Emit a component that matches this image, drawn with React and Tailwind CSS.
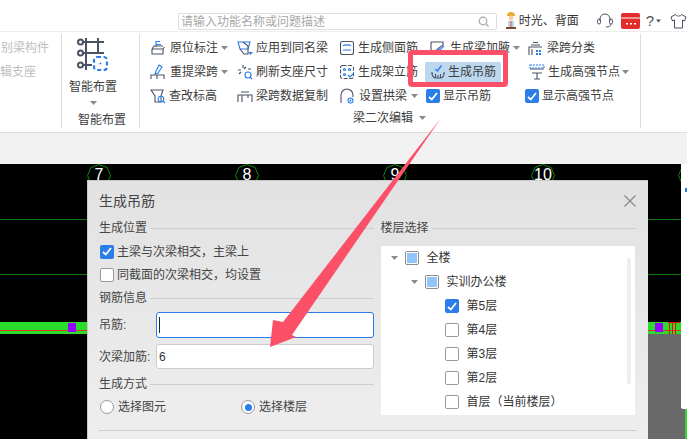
import React from 'react';

const INK = '#4b5262';
const BLUE = '#2b7de9';

function Svg({ w = 16, h = 16, children, className = '' }) {
  return (
    <svg width={w} height={h} viewBox={`0 0 ${w} ${h}`} fill="none" stroke={INK} strokeWidth="1.1" className={`shrink-0 ${className}`}>
      {children}
    </svg>
  );
}

function Caret({ color = '#8a8a8a', w = 7 }) {
  return (
    <svg width={w} height="4" viewBox="0 0 7 4" className="shrink-0">
      <path d="M0 0h7L3.5 4z" fill={color} />
    </svg>
  );
}

const IconYuanwei = () => (
  <Svg>
    <path d="M6 1v6M6 1.5h4M6 4.5h5" stroke={BLUE} />
    <path d="M2 9h11l1.500 -2M2 9v5h11V9M2 9l2-3h9" />
  </Svg>
);
const IconApply = () => (
  <Svg>
    <path d="M1 2h12l-2 7H3z" stroke={BLUE} />
    <path d="M6 2l5 4v8H7L3 9" />
    <path d="M11 12h5l-2.500 3z" fill={BLUE} stroke="none" />
  </Svg>
);
const IconSide = () => (
  <Svg w={14}>
    <rect x="0.500" y="1.500" width="13" height="13" rx="2" />
    <path d="M3 6c1-1.500 7-1.500 8 0M3 10h8" stroke={BLUE} />
  </Svg>
);
const IconHaunch = () => (
  <Svg>
    <path d="M1 2h12v3L4 12v3M1 2v10h3" />
    <path d="M8 8l2 2 4-4" stroke={BLUE} />
  </Svg>
);
const IconClass = () => (
  <Svg>
    <path d="M1 15V7h13M3 5h9M5 2.500h5M4 15V9" />
    <path d="M8 10h2v2H8zM11 10h2v2h-2zM8 13h2v2H8zM11 13h2v2h-2z" fill={BLUE} stroke="none" />
  </Svg>
);
const IconRedo = () => (
  <Svg>
    <path d="M9 1l3 2-4 6-3 1 1-3z" stroke={BLUE} />
    <path d="M1 15v-4h13v4M7 11v4" />
  </Svg>
);
const IconRefresh = () => (
  <Svg>
    <path d="M6 1v3M1 6h3M2 10l2-2M9 3L7 5M11 5h3" />
    <circle cx="11" cy="11" r="3" stroke={BLUE} />
    <path d="M13 13l2 2" stroke={BLUE} />
  </Svg>
);
const IconStand = () => (
  <Svg w={14}>
    <rect x="0.500" y="1.500" width="13" height="13" rx="2" strokeDasharray="4 1.500" />
    <circle cx="4.500" cy="5.500" r="1" stroke={BLUE} />
    <circle cx="9.500" cy="5.500" r="1" stroke={BLUE} />
    <circle cx="4.500" cy="10.500" r="1" stroke={BLUE} />
    <path d="M8 11l2 2 4-4" stroke={BLUE} />
  </Svg>
);
const IconHanger = () => (
  <Svg>
    <path d="M1 9h2M13 9h2M2 9c0 3 1.500 5 4 5h4c2.500 0 4-2 4-5M5.500 10v4M8 11v3M10.500 10v4" />
    <path d="M5.500 5l2 2 4-5.500" stroke={BLUE} strokeWidth="1.400" />
  </Svg>
);
const IconStrong = () => (
  <Svg>
    <path d="M1 5h14M3 9h10M8 9v6M5 15h6" />
    <path d="M1 1h14v3H1z" stroke={BLUE} strokeDasharray="2 1" />
  </Svg>
);
const IconCheckEl = () => (
  <Svg>
    <path d="M1 2h12l-2 6v6H5V8z" />
    <circle cx="11" cy="11" r="2.800" stroke={BLUE} />
    <path d="M13 13l2 2" stroke={BLUE} />
  </Svg>
);
const IconCopy = () => (
  <Svg>
    <path d="M1 14V7h14v7M4 4h8M5 7v7M11 7v3" />
  </Svg>
);
const IconArch = () => (
  <Svg w={14}>
    <path d="M1 15V7a6 6 0 0 1 12 0v2" />
    <circle cx="10.500" cy="12.500" r="2.500" stroke={BLUE} />
    <circle cx="10.500" cy="12.500" r="1" fill={BLUE} stroke="none" />
  </Svg>
);

function SmartIcon() {
  return (
    <svg width="32" height="33" viewBox="0 0 32 33" fill="none" stroke={INK} strokeWidth="2" className="shrink-0">
      <path d="M5 4h22M5 15h22M5 27h10M9 0v32M21 0v14" />
      <circle cx="3.500" cy="4" r="2.500" fill="#fff" />
      <circle cx="3.500" cy="15" r="2.500" fill="#fff" />
      <circle cx="3.500" cy="27" r="2.500" fill="#fff" />
      <rect x="17" y="19" width="13" height="13" rx="3" fill="#fff" stroke={BLUE} strokeWidth="2.200" strokeDasharray="4 2.500" />
      <circle cx="23.500" cy="25.500" r="1" fill={BLUE} stroke="none" />
    </svg>
  );
}

function Check({ on }) {
  if (on) {
    return (
      <span className="flex h-[14px] w-[14px] shrink-0 items-center justify-center rounded-[2px] bg-[#2b7de9]">
        <svg width="10" height="9" viewBox="0 0 10 9" fill="none" stroke="#fff" strokeWidth="1.800">
          <path d="M1 5l2.800 2.500L9 1" />
        </svg>
      </span>
    );
  }
  return <span className="h-[14px] w-[14px] shrink-0 rounded-[2px] border border-[#9a9a9a] bg-white" />;
}

function Partial() {
  return (
    <span className="flex h-[14px] w-[14px] shrink-0 items-center justify-center rounded-[2px] border border-[#8c8c8c] bg-white">
      <span className="h-[10px] w-[10px] bg-[#93c5fd]" />
    </span>
  );
}

function Radio({ on }) {
  return (
    <span className="flex h-[14px] w-[14px] shrink-0 items-center justify-center rounded-full border border-[#9a9a9a] bg-white">
      {on && <span className="h-[7px] w-[7px] rounded-full bg-[#2b7de9]" />}
    </span>
  );
}

function Cell({ icon, text, caret, gap = 'gap-1', pl = 'pl-0' }) {
  return (
    <div className={`flex h-6 items-center whitespace-nowrap ${gap} ${pl}`}>
      {icon}
      <span>{text}</span>
      {caret && <span className="-ml-px"><Caret /></span>}
    </div>
  );
}

function Legend({ text, className = '' }) {
  return (
    <div className={`flex h-4 items-center gap-[3px] text-[#444] ${className}`}>
      <span className="whitespace-nowrap">{text}</span>
      <span className="h-px flex-1 bg-[#cdcdcd]" />
    </div>
  );
}

function Axis({ x, label }) {
  return (
    <div className="absolute top-0 h-6 w-6" style={{ left: x - 12 }}>
      <svg width="24" height="24" viewBox="0 0 24 24" fill="none" stroke="#0a8a0a" className="absolute left-0 top-0">
        <path d="M12 .5l8 3 3.500 8-3.500 8-8 4-8-4-3.500-8 3.500-8z" />
      </svg>
      <span className="absolute inset-x-0 top-px text-center font-['Liberation_Sans',sans-serif] text-[16px] leading-5 text-white">{label}</span>
    </div>
  );
}

function Ribbon() {
  return (
    <div className="flex h-[100px] bg-white pt-[2px]">
      <div className="h-[94px] w-[62px] shrink-0 border-r border-[#dcdcdc] pt-[2px] text-[#bdbdbd]">
        <div className="flex h-6 items-center pl-px">别梁构件</div>
        <div className="flex h-6 items-center">辑支座</div>
      </div>

      <div className="flex h-[94px] w-[78px] shrink-0 flex-col border-r border-[#dcdcdc]">
        <div className="ml-[15px] mt-[4px]"><SmartIcon /></div>
        <div className="ml-[7px] mt-[6px] leading-5">智能布置</div>
        <div className="ml-[28px] mt-[4px]"><Caret /></div>
        <div className="ml-[16px] mt-[5px] leading-5">智能布置</div>
      </div>

      <div className="flex h-[94px] w-[501px] shrink-0 flex-col border-r border-[#dcdcdc] pl-[10px] pt-[2px]">
        <div className="flex">
          <div className="w-[87px]">
            <Cell icon={<IconYuanwei />} text="原位标注" caret />
            <Cell icon={<IconRedo />} text="重提梁跨" caret />
            <Cell icon={<IconCheckEl />} text="查改标高" gap="gap-[3px]" />
          </div>
          <div className="w-[103px]">
            <Cell icon={<IconApply />} text="应用到同名梁" gap="gap-[3px]" />
            <Cell icon={<IconRefresh />} text="刷新支座尺寸" gap="gap-[3px]" />
            <Cell icon={<IconCopy />} text="梁跨数据复制" gap="gap-[3px]" />
          </div>
          <div className="w-[85px]">
            <Cell icon={<IconSide />} text="生成侧面筋" />
            <Cell icon={<IconStand />} text="生成架立筋" />
            <Cell icon={<IconArch />} text="设置拱梁" caret gap="gap-[5px]" />
          </div>
          <div className="w-[100px]">
            <Cell icon={<IconHaunch />} text="生成梁加腋" caret pl="pl-[5px]" />
            <div className="flex h-6 items-center">
              <div className="flex h-[21px] w-[76px] items-center gap-[2px] rounded-[2px] bg-[#bdd7f0] pl-[5px]">
                <IconHanger />
                <span className="whitespace-nowrap">生成吊筋</span>
              </div>
            </div>
            <Cell icon={<Check on />} text="显示吊筋" gap="gap-[3px]" pl="pl-px" />
          </div>
          <div>
            <Cell icon={<IconClass />} text="梁跨分类" gap="gap-[3px]" pl="pl-[3px]" />
            <Cell icon={<IconStrong />} text="生成高强节点" caret gap="gap-[3px]" pl="pl-[4px]" />
            <Cell icon={<Check on />} text="显示高强节点" gap="gap-[3px]" />
          </div>
        </div>
        <div className="flex h-5 items-center gap-[6px] pl-[203px]">
          <span>梁二次编辑</span>
          <Caret />
        </div>
      </div>
    </div>
  );
}

function TopBar() {
  return (
    <div className="flex h-[32px] items-end border-b border-[#eeeeee] bg-white pb-px pl-[178px]">
      <div className="flex h-[17px] w-[319px] items-center justify-between rounded-[2px] border border-[#dedede] pl-[2px] pr-[7px] text-[#a8a8a8]">
        <span>请输入功能名称或问题描述</span>
        <svg width="11" height="11" viewBox="0 0 11 11" fill="none" stroke="#a8a8a8" strokeWidth="1.200">
          <circle cx="5" cy="5" r="3.800" />
          <path d="M8 8l2.500 2.500" />
        </svg>
      </div>
      <div className="ml-[8px] flex h-[18px] items-center">
        <svg width="12" height="18" viewBox="0 0 12 18" className="shrink-0">
          <path d="M2 4a4 4 0 0 1 8 0z" fill="#e8a92c" />
          <circle cx="6" cy="6" r="2.500" fill="#f3cfa8" />
          <path d="M3 9h6v6H3z" fill="#bcd5ea" />
          <path d="M5.500 9h1v6h-1z" fill="#d9534f" />
          <path d="M1 15h10v2H1z" fill="#7a4b23" />
        </svg>
        <span className="ml-[2px] whitespace-nowrap text-[#333]">时光、背面</span>
        <svg width="16" height="16" viewBox="0 0 16 16" fill="none" stroke={INK} className="ml-[18px] shrink-0">
          <path d="M3 8V6a5 5 0 0 1 10 0v2" />
          <rect x="0.500" y="6" width="3" height="5" rx="1.500" />
          <rect x="12.500" y="6" width="3" height="5" rx="1.500" />
          <path d="M14 11c0 2-2 3-5 3" />
        </svg>
        <svg width="19" height="16" viewBox="0 0 19 16" className="ml-[8px] shrink-0">
          <rect width="19" height="16" rx="2" fill="#e22d2d" />
          <path d="M0 5h19" stroke="#fff" />
          <path d="M5 10h2v1.500H5zM9 10h2v1.500H9zM13 10h2v1.500h-2z" fill="#fff" />
        </svg>
        <span className="ml-[6px] font-['Liberation_Sans',sans-serif] text-[15px] text-[#555]">?</span>
        <span className="ml-[2px]"><Caret color="#555" w={5} /></span>
        <svg width="17" height="16" viewBox="0 0 17 16" fill="none" stroke={INK} className="ml-[9px] shrink-0">
          <path d="M5.500 1.500L1 4l1.500 4 2-1v8h8V7l2 1L16 4l-4.500-2.500c-.5 2-5.500 2-6 0z" />
        </svg>
      </div>
    </div>
  );
}

function Dialog() {
  return (
    <div className="absolute bottom-0 left-[87px] top-[16px] w-[561px] border-l border-t border-[#c9c9c9] bg-linear-to-b from-[#e2e2e2] to-[#eeeeee] pl-[11px] pr-3 text-[#444]">
      <div className="flex h-[39px] items-center justify-between">
        <span className="text-[14px] text-[#444]">生成吊筋</span>
        <svg width="12" height="12" viewBox="0 0 12 12" stroke="#888" strokeWidth="1.200">
          <path d="M.5.5l11 11M11.500.5l-11 11" />
        </svg>
      </div>

      <div className="flex gap-[6px]">
        <div className="w-[276px]">
          <Legend text="生成位置" />
          <div className="mt-1 flex h-[23px] items-center gap-[3px] pl-px"><Check on /><span>主梁与次梁相交，主梁上</span></div>
          <div className="flex h-[23px] items-center gap-[3px] pl-px"><Check /><span>同截面的次梁相交，均设置</span></div>
          <Legend text="钢筋信息" className="mt-1" />
          <div className="mt-[6px] flex h-[26px] items-center">
            <span className="w-[57px] shrink-0">吊筋:</span>
            <div className="flex h-full flex-1 items-center rounded-[3px] border border-[#2b7de9] bg-white pl-[2px]">
              <span className="h-4 w-px bg-[#222]" />
            </div>
          </div>
          <div className="mt-[6px] flex h-[25px] items-center">
            <span className="w-[57px] shrink-0">次梁加筋:</span>
            <div className="flex h-full flex-1 items-center rounded-[3px] border border-[#cccccc] bg-white pl-[2px] text-[#333]">6</div>
          </div>
          <Legend text="生成方式" className="mt-[7px]" />
          <div className="mt-[5px] flex h-5 items-center pl-px">
            <div className="flex w-[141px] items-center gap-1"><Radio /><span>选择图元</span></div>
            <div className="flex items-center gap-1"><Radio on /><span>选择楼层</span></div>
          </div>
        </div>

        <div className="w-[256px]">
          <Legend text="楼层选择" />
          <div className="ml-px mt-[10px] flex h-[169px] w-[254px] justify-between overflow-hidden bg-white text-[#333]">
            <div>
              <div className="flex h-6 items-center pl-[10px]">
                <Caret />
                <span className="ml-[7px]"><Partial /></span>
                <span className="ml-[7px]">全楼</span>
              </div>
              <div className="flex h-6 items-center pl-[30px]">
                <Caret />
                <span className="ml-[7px]"><Partial /></span>
                <span className="ml-[7px]">实训办公楼</span>
              </div>
              <div className="flex h-6 items-center gap-[7px] pl-[64px]"><Check on /><span>第5层</span></div>
              <div className="flex h-6 items-center gap-[7px] pl-[64px]"><Check /><span>第4层</span></div>
              <div className="flex h-6 items-center gap-[7px] pl-[64px]"><Check /><span>第3层</span></div>
              <div className="flex h-6 items-center gap-[7px] pl-[64px]"><Check /><span>第2层</span></div>
              <div className="flex h-6 items-center gap-[7px] whitespace-nowrap pl-[64px]"><Check /><span>首层（当前楼层）</span></div>
            </div>
            <div className="mr-[4px] mt-[12px] h-[126px] w-1 rounded-full bg-[#eeeeee]" />
          </div>
        </div>
      </div>

      <div className="mt-[13px] h-px bg-[#cdcdcd]" />
    </div>
  );
}

function Canvas() {
  return (
    <div className="relative flex-1 overflow-hidden bg-black">
      <Axis x={99} label="7" />
      <Axis x={247} label="8" />
      <Axis x={395} label="9" />
      <Axis x={543} label="10" />
      <Axis x={690} label="" />

      {/* 轴线和梁 */}
      <div className="absolute left-0 top-[55px] h-px w-full bg-[#0a7a0a]" />
      <div className="absolute left-0 top-[110px] h-px w-full bg-[#0a7a0a]" />
      <div className="absolute left-0 top-[170px] h-[105px] w-full bg-[#696969]" />
      <div className="absolute left-0 top-[158px] h-3 w-full bg-[#2bdc2b]" />
      <div className="absolute left-0 top-[166px] h-px w-full bg-[#d8342a]" />
      <div className="absolute left-0 top-[170px] h-[105px] w-[87px] bg-black" />
      <div className="absolute left-[68px] top-[159px] h-[9px] w-2 bg-[#9400ff]" />
      <div className="absolute left-[655px] top-[159px] h-[9px] w-2 bg-[#9400ff]" />
      <div className="absolute left-[668px] top-[158px] h-px w-3 bg-[#ff0000]" />
      <div className="absolute left-[669px] top-[158px] h-3 w-px bg-[#ff0000]" />
      <div className="absolute left-[672px] top-[158px] h-3 w-px bg-[#ff0000]" />
      <div className="absolute left-[675px] top-[158px] h-3 w-px bg-[#ff0000]" />

      <div className="absolute left-[685px] top-[245px] h-[30px] w-[2px] bg-[#2bdc2b]" />
      <div className="absolute left-[681px] top-0 h-[245px] w-[6px] rounded-bl-[2px] bg-white" />
      <div className="absolute left-[685px] top-[24px] h-1 w-[2px] bg-[#2b7de9]" />

      <Dialog />
    </div>
  );
}

export default function App() {
  return (
    <div className="relative flex h-[439px] w-[687px] flex-col overflow-hidden bg-white font-['Liberation_Sans','Noto_Sans_CJK_SC',sans-serif] text-[12px] leading-4 text-[#3c3c3c]">
      <TopBar />
      <Ribbon />
      <div className="h-[32px] border-t border-[#dddddd] bg-[#f1f1f1]" />
      <Canvas />

      {/* 标注：红框和箭头 */}
      <div className="absolute left-[408px] top-[50px] h-[37px] w-[100px] rounded-[4px] border-[5px] border-[#fb5068]" />
      <svg width="687" height="439" className="pointer-events-none absolute left-0 top-0">
        <polygon points="441,118 292,335 296,337 270,347 273,320 283,322" fill="#fb5068" />
      </svg>
    </div>
  );
}
